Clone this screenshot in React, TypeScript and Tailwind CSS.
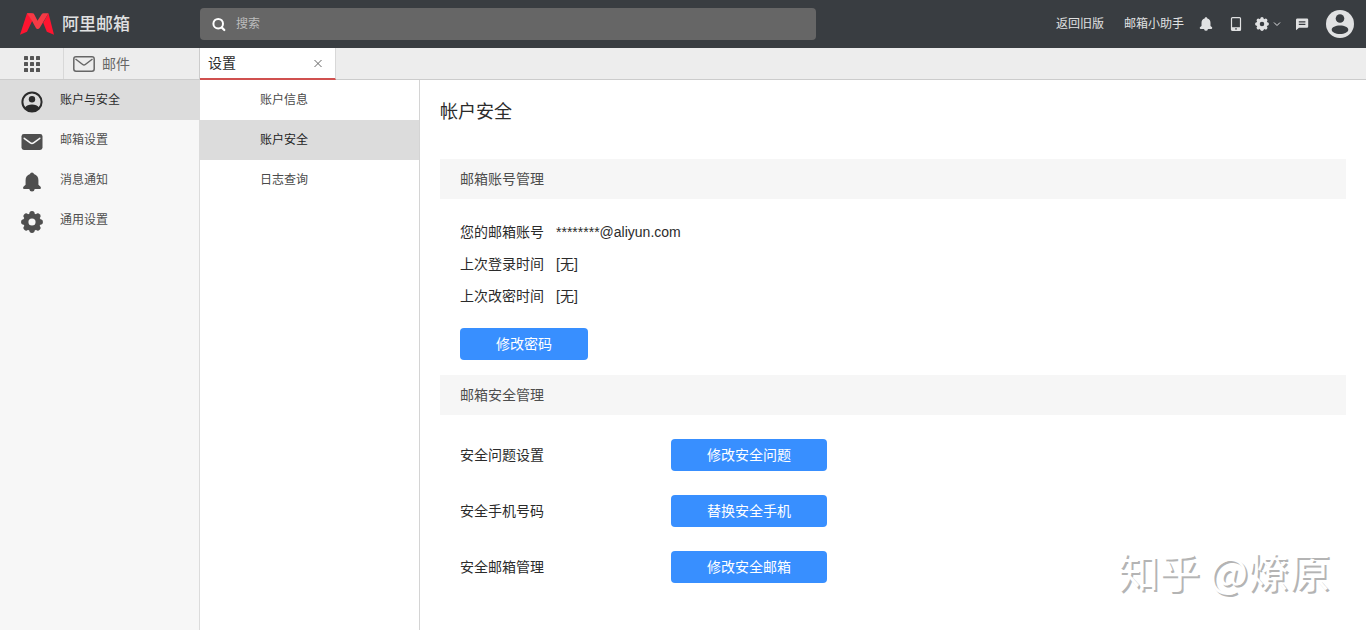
import type { ReactNode } from "react";

type IconProps = { className?: string };

const bumps = [0, 45, 90, 135, 180, 225, 270, 315];

function GearIcon({ className }: IconProps) {
  return (
    <svg viewBox="0 0 24 24" className={className} aria-hidden="true">
      <circle cx="12" cy="12" r="6.7" fill="none" stroke="currentColor" strokeWidth="5.6" />
      {bumps.map((a) => (
        <circle key={a} cx="12" cy="3" r="2.9" fill="currentColor" transform={`rotate(${a} 12 12)`} />
      ))}
    </svg>
  );
}

function BellIcon({ className }: IconProps) {
  return (
    <svg viewBox="0 0 24 24" className={className} fill="currentColor" aria-hidden="true">
      <path d="M12 .5c1.300 0 2.200.9 2.300 2 3.500 1 5.400 3.800 5.400 7.300v5.600l2.300 1.900c1.300 1.200.7 3.200-1 3.200H3c-1.700 0-2.300-2-1-3.200l2.300-1.900V9.800c0-3.500 1.900-6.300 5.400-7.300C9.800 1.400 10.700.5 12 .5z" />
      <path d="M9 20h6v.8a3 2.700 0 0 1-6 0z" />
    </svg>
  );
}

function MailSolidIcon({ className }: IconProps) {
  return (
    <svg viewBox="0 0 24 24" className={className} aria-hidden="true">
      <rect x="1.500" y="4" width="21" height="16" rx="2.400" fill="currentColor" />
      <path d="M4.200 8.300l6.200 4.600c1 .8 2.200.8 3.200 0l6.200-4.600" fill="none" stroke="#f7f7f7" strokeWidth="1.500" strokeLinecap="round" />
    </svg>
  );
}

function MailOutlineIcon({ className }: IconProps) {
  return (
    <svg viewBox="0 0 22 16" className={className} fill="none" stroke="currentColor" strokeWidth="1.500" aria-hidden="true">
      <rect x=".8" y=".8" width="20.400" height="14.400" rx="2.200" />
      <path d="M2.500 3l7.200 5.500c.8.6 1.800.6 2.600 0L19.500 3" />
    </svg>
  );
}

function PersonRingIcon({ className }: IconProps) {
  return (
    <svg viewBox="0 0 24 24" className={className} aria-hidden="true">
      <circle cx="12" cy="12" r="9.600" fill="none" stroke="currentColor" strokeWidth="2" />
      <circle cx="12" cy="9.300" r="3.200" fill="currentColor" />
      <path d="M4.800 17.800c1.500-2.600 4.200-3.300 7.200-3.300s5.700.7 7.200 3.300A9.600 9.600 0 0 1 12 21.700a9.600 9.600 0 0 1-7.200-3.900z" fill="currentColor" />
    </svg>
  );
}

function AvatarIcon({ className }: IconProps) {
  return (
    <svg viewBox="0 0 28 28" className={className} aria-hidden="true">
      <circle cx="14" cy="14" r="14" fill="currentColor" />
      <circle cx="14" cy="8.500" r="4.300" fill="#393d41" />
      <path d="M14 15.500c4.600 0 8.300 1.900 8.300 4.200S18.600 24 14 24s-8.300-2-8.300-4.300 3.700-4.200 8.300-4.200z" fill="#393d41" />
    </svg>
  );
}

function GridIcon({ className }: IconProps) {
  return (
    <svg viewBox="0 0 16 16" className={className} fill="currentColor" aria-hidden="true">
      {[0, 6, 12].map((y) => [0, 6, 12].map((x) => <rect key={`${x}-${y}`} x={x} y={y} width="4" height="4" rx=".6" />))}
    </svg>
  );
}

function Logo({ className }: IconProps) {
  return (
    <svg viewBox="0 0 34 22" className={className} aria-hidden="true">
      <path d="M7 .3h4.500l2 5-6.500 13.500L0 21.700z" fill="#ff1430" />
      <path d="M28.500 .3L34 21.700l-7.200-2.900-3.600-9z" fill="#ff1430" />
      <path d="M7 .3h5.400c1 0 1.500.5 1.900 1.300l3.200 6.200 4-6.200c.6-.9 1.200-1.300 2.200-1.300h4.800l-8.700 14.500c-1 1.600-3.200 1.600-4 0L11.500 7z" fill="#f53a45" />
    </svg>
  );
}

function SideItem({ icon, label, active }: { icon: ReactNode; label: string; active?: boolean }) {
  return (
    <li>
      <a
        href="#"
        aria-current={active ? "page" : undefined}
        className={`flex h-10 items-center gap-4 pl-5 text-xs ${active ? "bg-[#dcdcdc] text-[#2b2b2b]" : "text-[#4f4f4f]"}`}
      >
        <span className="mt-1">{icon}</span>
        {label}
      </a>
    </li>
  );
}

function SubItem({ label, active }: { label: string; active?: boolean }) {
  return (
    <li>
      <a
        href="#"
        aria-current={active ? "page" : undefined}
        className={`flex h-10 items-center pl-[60px] text-xs ${active ? "bg-[#dcdcdc] text-[#222]" : "text-[#4a4a4a]"}`}
      >
        {label}
      </a>
    </li>
  );
}

function SectionTitle({ children }: { children: ReactNode }) {
  return <h2 className="flex h-10 items-center bg-[#f6f6f6] px-5 text-sm text-[#4d4d4d]">{children}</h2>;
}

function ActionButton({ children, wide }: { children: ReactNode; wide?: boolean }) {
  return (
    <button type="button" className={`flex h-8 items-center justify-center rounded bg-[#388fff] text-sm text-white ${wide ? "w-[156px]" : "w-32"}`}>
      {children}
    </button>
  );
}

const account = [
  ["您的邮箱账号", "********@aliyun.com"],
  ["上次登录时间", "[无]"],
  ["上次改密时间", "[无]"],
];

const security = [
  ["安全问题设置", "修改安全问题"],
  ["安全手机号码", "替换安全手机"],
  ["安全邮箱管理", "修改安全邮箱"],
];

export default function App() {
  return (
    <div className="relative flex min-h-screen flex-col bg-white font-['Liberation_Sans','Noto_Sans_CJK_SC',sans-serif] text-[#2b2b2b]">
      <header className="flex h-12 items-center bg-[#393d41] text-[#e0e1e2]">
        <a href="#" className="flex w-[200px] shrink-0 items-center gap-2 pl-5 text-[17px] font-medium leading-none">
          <Logo className="h-[22px] w-[34px]" />
          阿里邮箱
        </a>
        <label className="flex h-8 w-[616px] items-center gap-2 rounded bg-[#666] pl-3">
          <svg viewBox="0 0 16 16" className="size-4" fill="none" stroke="#fff" aria-hidden="true">
            <circle cx="6.200" cy="7.700" r="4.800" strokeWidth="2" />
            <path d="M9.900 11.600l2.400 2.400" strokeWidth="2.200" strokeLinecap="round" />
          </svg>
          <input type="text" aria-label="搜索" placeholder="搜索" className="min-w-0 flex-1 bg-transparent text-xs outline-none placeholder:text-[#bdbdbd]" />
        </label>
        <nav className="ml-auto flex items-center pr-3 text-xs">
          <a href="#" className="mr-5">返回旧版</a>
          <a href="#" className="mr-[15px]">邮箱小助手</a>
          <button type="button" aria-label="通知" className="mr-4">
            <BellIcon className="size-3.5" />
          </button>
          <button type="button" aria-label="手机" className="mr-3">
            <svg viewBox="0 0 14 14" className="size-3.5" aria-hidden="true">
              <rect x="2.500" y=".6" width="9" height="12.800" rx="1" fill="none" stroke="currentColor" strokeWidth="1.200" />
              <path d="M2.500 10.200h9v3.200h-9z" fill="currentColor" />
              <circle cx="7" cy="11.900" r=".8" fill="#393d41" />
            </svg>
          </button>
          <button type="button" aria-label="设置菜单" className="mr-3.5 flex items-center gap-1">
            <GearIcon className="size-3.5" />
            <svg viewBox="0 0 8 8" className="size-2" fill="none" stroke="currentColor" aria-hidden="true">
              <path d="M1 2.500l3 3 3-3" />
            </svg>
          </button>
          <button type="button" aria-label="消息" className="mr-[17px]">
            <svg viewBox="0 0 14 14" className="size-3.5" aria-hidden="true">
              <path d="M2 1.500h10a1.200 1.200 0 0 1 1.200 1.200v6.800a1.200 1.200 0 0 1-1.200 1.200H4l-3 2.500V2.700A1.200 1.200 0 0 1 2 1.500z" fill="currentColor" />
              <path d="M3.800 4.900h6.600M3.800 7.300h6.600" stroke="#393d41" strokeWidth="1.200" />
            </svg>
          </button>
          <button type="button" aria-label="个人资料">
            <AvatarIcon className="size-7" />
          </button>
        </nav>
      </header>

      <div className="flex h-8 bg-[#ededed]">
        <div className="flex w-[200px] shrink-0 border-r border-b border-[#ccc] text-[#555]">
          <button type="button" aria-label="应用" className="flex w-16 items-center justify-center border-r border-[#d8d8d8]">
            <GridIcon className="size-4" />
          </button>
          <a href="#" className="flex items-center gap-[7px] pl-[9px] text-sm text-[#666]">
            <MailOutlineIcon className="h-4 w-[22px]" />
            邮件
          </a>
        </div>
        <div className="flex w-[136px] items-center justify-between border-r border-b-2 border-r-[#d8d8d8] border-b-[#d0504f] bg-white pr-3 pl-2 text-sm">
          设置
          <button type="button" aria-label="关闭" className="text-[#666]">
            <svg viewBox="0 0 10 10" className="size-2.5" fill="none" stroke="currentColor" aria-hidden="true">
              <path d="M1.500 2l7 7M8.500 2l-7 7" />
            </svg>
          </button>
        </div>
        <div className="flex-1 border-b border-[#ccc]" />
      </div>

      <div className="flex flex-1">
        <nav className="w-[200px] shrink-0 border-r border-[#dcdcdc] bg-[#f7f7f7]">
          <ul>
            <SideItem active label="账户与安全" icon={<PersonRingIcon className="size-6" />} />
            <SideItem label="邮箱设置" icon={<MailSolidIcon className="size-6" />} />
            <SideItem label="消息通知" icon={<BellIcon className="size-6 p-0.5" />} />
            <SideItem label="通用设置" icon={<GearIcon className="size-6 p-px" />} />
          </ul>
        </nav>
        <nav className="w-[220px] shrink-0 border-r border-[#d4d4d4]">
          <ul>
            <SubItem label="账户信息" />
            <SubItem active label="账户安全" />
            <SubItem label="日志查询" />
          </ul>
        </nav>
        <main className="min-w-0 flex-1 px-5">
          <h1 className="pt-[18px] pb-[33px] text-lg">帐户安全</h1>
          <SectionTitle>邮箱账号管理</SectionTitle>
          <div className="px-5 pt-[17px] pb-[15px] text-sm">
            <dl className="pb-4">
              {account.map(([name, value]) => (
                <div key={name} className="flex h-8 items-center gap-3">
                  <dt>{name}</dt>
                  <dd>{value}</dd>
                </div>
              ))}
            </dl>
            <ActionButton>修改密码</ActionButton>
          </div>
          <SectionTitle>邮箱安全管理</SectionTitle>
          <ul className="flex flex-col gap-6 px-5 py-6 text-sm">
            {security.map(([name, action]) => (
              <li key={name} className="flex items-center">
                <span className="w-[211px]">{name}</span>
                <ActionButton wide>{action}</ActionButton>
              </li>
            ))}
          </ul>
        </main>
      </div>

      <p className="pointer-events-none absolute right-9 bottom-8 font-['Noto_Sans_CJK_SC',sans-serif] text-[41px] leading-14 text-white [text-shadow:2px_2px_0_#b4b4b4]">
        知乎 @燎原
      </p>
    </div>
  );
}
